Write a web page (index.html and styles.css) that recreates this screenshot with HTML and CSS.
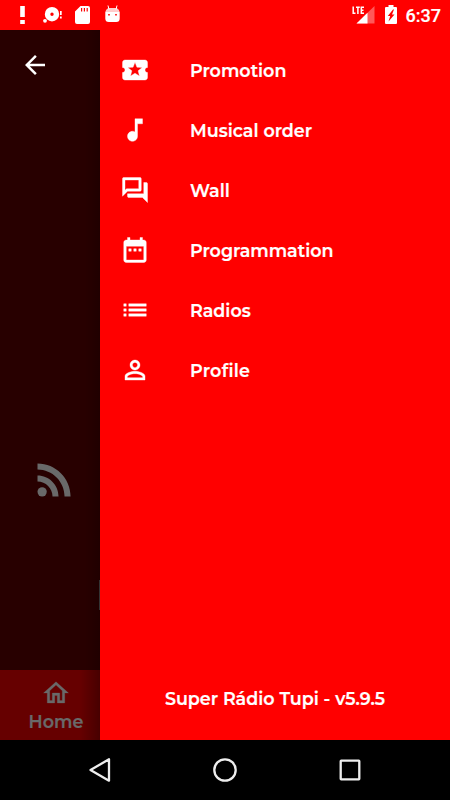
FILE: index.html
```
<!DOCTYPE html>
<html lang="en">
<head>
  <meta charset="UTF-8">
  <title>Super Rádio Tupi</title>
  <meta name="viewport" content="width=device-width, initial-scale=1.0">
  <link rel="stylesheet" href="styles.css">
</head>
<body>
  <header class="status-bar">
    <div class="notifications">
      <svg width="10" height="20" viewBox="0 0 10 20"><path d="M3.200 1h4.600v11H3.200zM3.200 15h4.600v4H3.200z"/></svg>
      <svg class="disc" width="20" height="20" viewBox="0 0 20 20"><path fill-rule="evenodd" d="M9 2a7.200 7.200 0 1 1 0 14.400A7.200 7.200 0 0 1 9 2zm0 5.600a1.700 1.700 0 1 0 0 3.400 1.700 1.700 0 0 0 0-3.400z"/><circle cx="2" cy="15.800" r="1.900"/><path d="M17 6h1.700v4H17zM17 11.500h1.700v2H17z"/></svg>
      <svg class="card" width="15" height="19" viewBox="0 0 15 19"><path fill-rule="evenodd" d="M5.500 0H13a2 2 0 0 1 2 2v14a2 2 0 0 1-2 2H2a2 2 0 0 1-2-2V5.500zM6 2v3.500h1.200V2zm2.800 0v3.500H10V2zm2.800 0v3.500h1.200V2z"/></svg>
      <svg class="droid" width="15" height="18" viewBox="0 0 15 18"><path d="M3 .5l1 4M12 .5l-1 4" stroke="#fff"/><path fill-rule="evenodd" d="M.3 7h14.400v6.500a3.500 3.500 0 0 1-3.500 3.500H3.800a3.500 3.500 0 0 1-3.500-3.500zM3.200 9v1.600h1.600V9zm7 0v1.600h1.600V9z"/><path opacity=".8" d="M.3 7Q1.500 3 4.500 3h6q3 0 4.200 4z"/></svg>
    </div>
    <div class="system">
      <svg width="24" height="20" viewBox="0 0 24 20"><path d="M22.500 1v17.500h-18z" opacity=".35"/><path d="M15.500 7.800v10.700h-11z"/><path d="M1.200 1.500v6.800h2.300M4 2.200h3.800M5.900 2.200v6.800M12 2.200H9.300v6.100H12M9.300 5.200h2.200" fill="none" stroke="#fff" stroke-width="1.500"/></svg>
      <svg class="battery" width="12" height="19" viewBox="0 0 12 19"><path fill-rule="evenodd" d="M3.500 0h5v2H11a1 1 0 0 1 1 1v15a1 1 0 0 1-1 1H1a1 1 0 0 1-1-1V3a1 1 0 0 1 1-1h2.500zM8 4.500L2.800 11h2.400L3.500 16.500l6-7H7L9 4.500z"/></svg>
      <span class="clock">6:37</span>
    </div>
  </header>

  <main class="screen">
    <section class="page">
      <svg class="back" width="30" height="30" viewBox="0 0 24 24"><path d="M20 11H7.830l5.590-5.590L12 4l-8 8 8 8 1.410-1.410L7.830 13H20v-2z"/></svg>
      <svg class="feed" width="51" height="51" viewBox="0 0 24 24"><circle cx="6.180" cy="17.820" r="2.180"/><path d="M4 4.440v2.830c7.030 0 12.730 5.700 12.730 12.730h2.830c0-8.590-6.970-15.560-15.560-15.560zm0 5.660v2.830c3.900 0 7.070 3.170 7.070 7.070h2.830c0-5.470-4.430-9.900-9.900-9.900z"/></svg>
      <div class="divider"></div>
      <div class="tab">
        <svg width="30" height="30" viewBox="0 0 24 24"><path d="M12 5.690l5 4.500V18h-2v-6H9v6H7v-7.810l5-4.500M12 3L2 12h3v8h6v-6h2v6h6v-8h3L12 3z"/></svg>
        <span>Home</span>
      </div>
    </section>

    <nav class="drawer">
      <ul class="menu">
        <li>
          <svg viewBox="0 0 24 24"><path d="M20 12c0-1.100.9-2 2-2V6c0-1.100-.9-2-2-2H4c-1.100 0-1.990.9-1.990 2v4c1.100 0 1.990.9 1.990 2s-.89 2-2 2v4c0 1.100.9 2 2 2h16c1.100 0 2-.9 2-2v-4c-1.100 0-2-.9-2-2zm-4.420 4.800L12 14.500l-3.580 2.300 1.080-4.120-3.290-2.690 4.240-.25L12 5.800l1.540 3.950 4.240.25-3.290 2.690 1.090 4.110z"/></svg>
          <span>Promotion</span>
        </li>
        <li>
          <svg viewBox="0 0 24 24"><path d="M12 3v10.550c-.59-.34-1.270-.55-2-.55-2.210 0-4 1.790-4 4s1.790 4 4 4 4-1.790 4-4V7h4V3h-6z"/></svg>
          <span>Musical order</span>
        </li>
        <li>
          <svg viewBox="0 0 24 24"><path d="M15 4v7H5.170L4 12.170V4h11m1-2H3c-.55 0-1 .45-1 1v14l4-4h10c.55 0 1-.45 1-1V3c0-.55-.45-1-1-1zm5 4h-2v9H6v2c0 .55.45 1 1 1h11l4 4V7c0-.55-.45-1-1-1z"/></svg>
          <span>Wall</span>
        </li>
        <li>
          <svg viewBox="0 0 24 24"><path d="M9 11H7v2h2v-2zm4 0h-2v2h2v-2zm4 0h-2v2h2v-2zm2-7h-1V2h-2v2H8V2H6v2H5c-1.110 0-1.990.9-1.990 2L3 20c0 1.100.89 2 2 2h14c1.100 0 2-.9 2-2V6c0-1.100-.9-2-2-2zm0 16H5V9h14v11z"/></svg>
          <span>Programmation</span>
        </li>
        <li>
          <svg viewBox="0 0 24 24"><path d="M3 13h2v-2H3v2zm0 4h2v-2H3v2zm0-8h2V7H3v2zm4 4h14v-2H7v2zm0 4h14v-2H7v2zM7 7v2h14V7H7z"/></svg>
          <span>Radios</span>
        </li>
        <li>
          <svg viewBox="0 0 24 24"><path d="M12 5.900c1.160 0 2.100.94 2.100 2.100s-.94 2.100-2.100 2.100S9.900 9.160 9.900 8s.94-2.100 2.100-2.100m0 9c2.970 0 6.100 1.460 6.100 2.100v1.100H5.900V17c0-.64 3.130-2.100 6.100-2.100M12 4C9.790 4 8 5.790 8 8s1.790 4 4 4 4-1.790 4-4-1.790-4-4-4zm0 9c-2.670 0-8 1.340-8 4v3h16v-3c0-2.660-5.330-4-8-4z"/></svg>
          <span class="profile">Profile</span>
        </li>
      </ul>
      <p class="version">Super Rádio Tupi - v5.9.5</p>
    </nav>
  </main>

  <footer class="nav-bar">
    <svg width="26" height="26" viewBox="0 0 26 26"><path d="M22 2.300v21.400L3.500 13z"/></svg>
    <svg width="26" height="26" viewBox="0 0 26 26"><circle cx="13" cy="13" r="10.700"/></svg>
    <svg width="26" height="26" viewBox="0 0 26 26"><rect x="3.700" y="3.700" width="18.600" height="18.600" rx=".5"/></svg>
  </footer>
</body>
</html>
```

FILE: styles.css
```
* { box-sizing: border-box; }

body {
  margin: 0;
  width: 450px;
  height: 800px;
  display: flex;
  flex-direction: column;
  overflow: hidden;
  background: #000;
  color: #fff;
  font-family: Montserrat, Inter, sans-serif;
  font-size: 17.5px;
  font-weight: 600;
  -webkit-text-stroke: 0.2px;
}

svg {
  display: block;
  flex: none;
  fill: #fff;
}

.status-bar {
  height: 30px;
  padding: 5px 9px 0 17px;
  display: flex;
  justify-content: space-between;
  background: #f00;
}

.notifications,
.system {
  display: flex;
  align-items: flex-start;
}

.disc { margin-left: 16px; }
.card { margin: 1px 0 0 12px; }
.droid { margin-left: 15px; }
.battery { margin-left: 9px; }

.clock {
  margin-left: 9px;
  font: 500 18px/22px Roboto, sans-serif;
}

.screen {
  flex: 1;
  display: flex;
}

.page {
  width: 100px;
  display: flex;
  flex-direction: column;
  background: linear-gradient(to right, transparent 85px, rgba(0, 0, 0, 0.2)), #280000;
}

.back { margin: 20px 0 0 20px; }

.feed {
  margin: 374px 0 0 29px;
  fill: #696969;
}

.divider {
  width: 1px;
  height: 30px;
  margin: 75px 0 60px auto;
  background: #333;
}

.tab {
  height: 70px;
  padding: 8px 0 0 12px;
  display: flex;
  flex-direction: column;
  align-items: center;
  background: linear-gradient(to right, transparent 80px, rgba(0, 0, 0, 0.3)), #600;
  color: #696969;
  line-height: 28px;
}

.tab svg {
  fill: #696969;
  stroke: #696969;
  stroke-width: 0.2;
}

.drawer {
  width: 350px;
  display: flex;
  flex-direction: column;
  justify-content: space-between;
  background: #f00;
}

.menu {
  margin: 0;
  padding: 10px 0 0;
  list-style: none;
}

.menu li {
  height: 60px;
  padding-left: 20px;
  display: flex;
  align-items: center;
  gap: 40px;
}

.menu svg {
  width: 30px;
  height: 30px;
  stroke: #fff;
  stroke-width: 0.3;
}

.profile { letter-spacing: 0.25px; }

.version {
  margin: 0 0 26px;
  text-align: center;
  line-height: 30px;
}

.nav-bar {
  height: 60px;
  display: flex;
  align-items: center;
  justify-content: center;
  gap: 99px;
}

.nav-bar svg {
  fill: none;
  stroke: #eee;
  stroke-width: 2.3;
  stroke-linejoin: round;
}
```
